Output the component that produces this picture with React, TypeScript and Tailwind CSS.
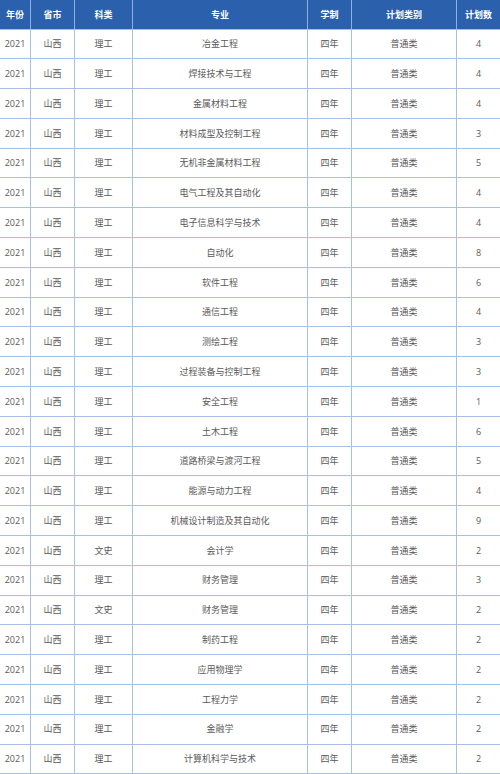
const rows: [string, string, string, string][] = [
  ['理工', '冶金工程', '普通类', '4'],
  ['理工', '焊接技术与工程', '普通类', '4'],
  ['理工', '金属材料工程', '普通类', '4'],
  ['理工', '材料成型及控制工程', '普通类', '3'],
  ['理工', '无机非金属材料工程', '普通类', '5'],
  ['理工', '电气工程及其自动化', '普通类', '4'],
  ['理工', '电子信息科学与技术', '普通类', '4'],
  ['理工', '自动化', '普通类', '8'],
  ['理工', '软件工程', '普通类', '6'],
  ['理工', '通信工程', '普通类', '4'],
  ['理工', '测绘工程', '普通类', '3'],
  ['理工', '过程装备与控制工程', '普通类', '3'],
  ['理工', '安全工程', '普通类', '1'],
  ['理工', '土木工程', '普通类', '6'],
  ['理工', '道路桥梁与渡河工程', '普通类', '5'],
  ['理工', '能源与动力工程', '普通类', '4'],
  ['理工', '机械设计制造及其自动化', '普通类', '9'],
  ['文史', '会计学', '普通类', '2'],
  ['理工', '财务管理', '普通类', '3'],
  ['文史', '财务管理', '普通类', '2'],
  ['理工', '制药工程', '普通类', '2'],
  ['理工', '应用物理学', '普通类', '2'],
  ['理工', '工程力学', '普通类', '2'],
  ['理工', '金融学', '普通类', '2'],
  ['理工', '计算机科学与技术', '普通类', '2'],
]

const cols = 'grid grid-cols-[31px_44px_58px_175px_44px_105px_43px]'

export default function App() {
  return (
    <div className="w-[500px] h-[774px] overflow-hidden bg-white font-['Open_Sans','Noto_Sans_CJK_SC',sans-serif]">
      <div className={`${cols} h-[29.5px] bg-[#2b60ac] text-white text-[9px] font-bold border-b border-[#a7c0e6]`}>
        {['年份', '省市', '科类', '专业', '学制', '计划类别', '计划数'].map((h, i) => (
          <div
            key={h}
            className={`flex items-center justify-center ${i < 6 ? 'border-r border-[#8fb0e0]' : ''}`}
          >
            {h}
          </div>
        ))}
      </div>
      {rows.map((r, idx) => (
        <div key={idx} className={`${cols} h-[29.8px] text-[9px] text-[#5a5a5a] border-b border-[#a7c0e6]`}>
          {['2021', '山西', r[0], r[1], '四年', r[2], r[3]].map((c, i) => (
            <div
              key={i}
              className={`flex items-center justify-center ${i < 6 ? 'border-r border-[#a7c0e6]' : ''}`}
            >
              {c}
            </div>
          ))}
        </div>
      ))}
    </div>
  )
}
